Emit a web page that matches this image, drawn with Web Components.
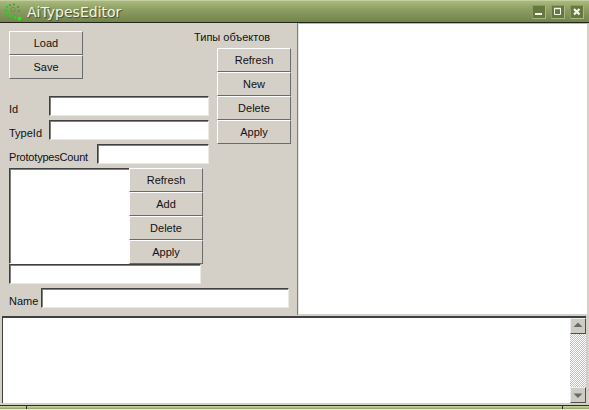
<!DOCTYPE html>
<html><head><meta charset="utf-8"><style>
html,body{margin:0;padding:0;background:#d4d0c8;overflow:hidden}
body{font:11px "Liberation Sans",Arial,sans-serif;color:#000;width:589px;height:410px}
</style></head><body>
<app-window>
  <title-bar slot="title">AiTypesEditor</title-bar>
  <types-form slot="form"></types-form>
  <white-pane slot="pane"></white-pane>
  <log-box slot="log"></log-box>
</app-window>
<script>
const def=(name,html,setup)=>customElements.define(name,class extends HTMLElement{
  constructor(){super();this.attachShadow({mode:'open'}).innerHTML=html;}
  connectedCallback(){setup&&setup(this)}
});
def('app-window',`<style>
:host{display:flex;flex-direction:column;width:589px;height:410px;box-sizing:border-box}
.main{display:flex;height:292px;flex:none}
.form{width:298px;flex:none}
.pane{flex:1;display:flex}
.log{display:flex;height:90px;flex:none}
.status{height:4px;flex:none;display:flex;gap:1px;background:#2a2d22;border-bottom:1px solid #e6e8dc}
.status i{display:block;background:linear-gradient(#cfd8ae,#8fa25e);height:3px;margin-top:1px}
.status i:nth-child(1){width:26px}.status i:nth-child(2){flex:1}.status i:nth-child(3){width:26px}
</style>
<slot name="title"></slot>
<div class="main"><div class="form"><slot name="form"></slot></div><div class="pane"><slot name="pane"></slot></div></div>
<div class="log"><slot name="log"></slot></div>
<div class="status"><i></i><i></i><i></i></div>`);
def('title-bar',`<style>
:host{display:flex;align-items:center;height:23px;box-sizing:border-box;flex:none;
 background:linear-gradient(#a9b97f 0,#8d9f63 40%,#72844b 100%);border-top:1px solid #c3cf9d;border-bottom:1px solid #20241a;padding:0 5px 0 4px}
svg.i{flex:none}
.t{font:14px "DejaVu Sans",sans-serif;color:#f2f4e8;text-shadow:1px 1px 1px #3d4a25;margin-left:5px;flex:1}
.b{display:flex;gap:5px}
</style>
<svg class="i" width="18" height="20" viewBox="4 1 18 20">
<g fill="#4d9a35"><circle cx="10" cy="4" r="1.1"/><circle cx="14" cy="3.5" r="1.1"/><circle cx="18" cy="6" r="1.1"/><circle cx="19" cy="10" r="1"/></g>
<circle cx="13" cy="8.5" r="2.2" fill="none" stroke="#5aa03c"/>
<g fill="#26cf26"><circle cx="7" cy="6" r="1.2"/><circle cx="6" cy="9.5" r="1.4"/><circle cx="7.5" cy="13" r="1.5"/><circle cx="11" cy="15" r="1.5"/></g>
<circle cx="15" cy="16.5" r="1.3" fill="#28d828"/><circle cx="19.5" cy="17.5" r="2" fill="#18f018"/></svg>
<span class="t"><slot></slot></span>
<span class="b"><win-button kind="min"></win-button><win-button kind="max"></win-button><win-button kind="close"></win-button></span>`);
def('win-button',`<style>
:host{display:block;width:14px;height:14px;box-sizing:border-box;background:#65793f;border:1px solid #8b9c62;border-right-color:#a9b883;border-bottom-color:#a9b883}
svg{display:block}
</style><svg width="12" height="12" viewBox="0 0 12 12" fill="none" stroke="#f4f6ea"></svg>`,h=>{
 const k=h.getAttribute('kind');
 h.shadowRoot.querySelector('svg').innerHTML=
  k==='min'?'<rect x="2" y="7" width="7" height="2" fill="#f4f6ea" stroke="none"/>':
  k==='max'?'<path d="M2.5 2.5h6v6h-6z"/><path d="M2 2.5h7" stroke-width="1.5"/>':
  '<path d="M3 3l5.5 5.5M8.5 3L3 8.5" stroke-width="2.2"/>';
});
def('form-button',`<style>
:host{display:flex;align-items:center;justify-content:center;box-sizing:border-box;width:74px;height:24px;background:#d4d0c8;
 border-top:1px solid #fff;border-left:1px solid #fff;border-right:1px solid #6b6b6b;border-bottom:1px solid #6b6b6b;
 font:11px "Liberation Sans",sans-serif;color:#111}
</style><slot></slot>`);
def('button-stack',`<style>:host{display:flex;flex-direction:column;flex:none}</style><slot></slot>`);
def('text-field',`<style>
:host{display:block;box-sizing:border-box;height:20px;background:#fff;border-top:1px solid #404040;border-left:1px solid #404040;border-right:1px solid #eceae4;border-bottom:1px solid #eceae4;
 box-shadow:inset 1px 1px 0 #808080;flex:none}
</style>`);
def('field-row',`<style>
:host{display:flex;align-items:flex-end;justify-content:space-between;height:20px;color:#111}
span{line-height:13px}
</style><span><slot name="label"></slot></span><slot></slot>`);
def('types-form',`<style>
:host{display:flex;flex-direction:column;height:100%;box-sizing:border-box;padding:8px 0 0 9px;border-right:1px solid #808080}
.top{display:flex;gap:8px}
.l{width:200px;display:flex;flex-direction:column}
.rows{display:flex;flex-direction:column;gap:4px;margin-top:17px}
.r{display:flex;flex-direction:column}
.cap{height:17px;line-height:13px;margin-left:-23px;white-space:nowrap;font-size:11px;color:#111}
.list{display:flex;margin-top:4px}
.box{width:120px;height:96px;box-sizing:border-box;background:#fff;border-top:1px solid #404040;border-left:1px solid #404040;box-shadow:inset 1px 1px 0 #808080;border-bottom:1px solid #fff}
.pc{letter-spacing:-.2px}
</style>
<div class="top">
 <div class="l">
  <button-stack><form-button>Load</form-button><form-button>Save</form-button></button-stack>
  <div class="rows">
   <field-row><span slot="label">Id</span><text-field style="width:160px"></text-field></field-row>
   <field-row><span slot="label">TypeId</span><text-field style="width:160px"></text-field></field-row>
   <field-row><span slot="label" class="pc">PrototypesCount</span><text-field style="width:112px"></text-field></field-row>
  </div>
 </div>
 <div class="r"><div class="cap">Типы объектов</div>
  <button-stack><form-button>Refresh</form-button><form-button>New</form-button><form-button>Delete</form-button><form-button>Apply</form-button></button-stack>
 </div>
</div>
<div class="list"><div class="box"></div>
 <button-stack><form-button>Refresh</form-button><form-button>Add</form-button><form-button>Delete</form-button><form-button>Apply</form-button></button-stack>
</div>
<text-field style="width:192px"></text-field>
<field-row style="width:280px;margin-top:4px"><span slot="label">Name</span><text-field style="width:248px"></text-field></field-row>`);
def('white-pane',`<style>:host{display:block;flex:1;box-sizing:border-box;background:#fff;border-top:1px solid #b8b8b0;border-left:1px solid #e4e4e0;border-right:2px solid #d4d0c8;border-bottom:1px solid #d4d0c8}</style>`);
def('scroll-arrow',`<style>:host{display:block;width:16px;height:16px;box-sizing:border-box;background:#cfccc4;border-top:1px solid #eee;border-left:1px solid #eee;border-right:1px solid #505050;border-bottom:1px solid #505050}svg{display:block}</style>
<svg width="14" height="14" viewBox="0 0 14 14"><path fill="#6a6a6a"></path></svg>`,h=>{
 h.shadowRoot.querySelector('path').setAttribute('d',h.getAttribute('dir')==='up'?'M7 3.5l4.5 4.5h-9z':'M2.5 5.5h9L7 10z');
});
def('log-box',`<style>:host{display:flex;flex:1;box-sizing:border-box;background:#fff;margin:1px 3px 2px 2px;border-top:2px solid #404040;border-left:1px solid #404040;justify-content:flex-end}
.bar{width:16px;display:flex;flex-direction:column;justify-content:space-between;background:repeating-conic-gradient(#c4c1b9 0 25%,#fff 0 50%) 0 0/2px 2px}</style>
<div class="bar"><scroll-arrow dir="up"></scroll-arrow><scroll-arrow dir="down"></scroll-arrow></div>`);
</script>
</body></html>
